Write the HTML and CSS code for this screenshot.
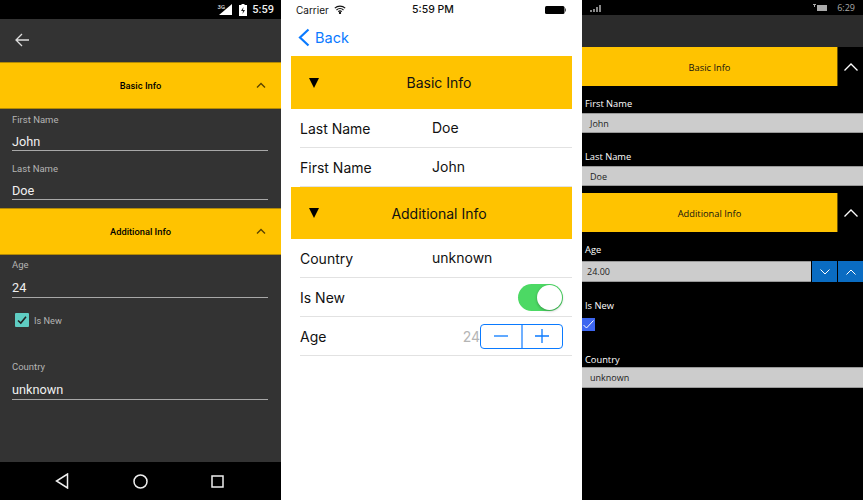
FILE: index.html
```html
<!DOCTYPE html>
<html lang="en">
<head>
<meta charset="UTF-8">
<meta name="viewport" content="width=device-width, initial-scale=1.0">
<title>Accordion Form</title>
<link rel="stylesheet" href="styles.css">
</head>
<body>
<div class="screens">

  <!-- Android -->
  <section class="android">
    <div class="a-status">
      <span class="a-net">3G</span>
      <svg class="a-signal" width="14" height="11" viewBox="0 0 14 11"><path d="M13 0v11H0z" fill="#fff"/></svg>
      <svg class="a-battery" width="8" height="12" viewBox="0 0 8 12"><path d="M2.500 0h3v1H8v11H0V1h2.500z" fill="#fff"/><path d="M4.500 3L2 7h2l-.5 3L6 6H4z" fill="#222"/></svg>
      <span class="a-time">5:59</span>
    </div>
    <div class="a-toolbar">
      <svg width="14" height="14" viewBox="0 0 14 14" fill="none" stroke="#ddd" stroke-width="1.300"><path d="M14 7H1M7 1L1 7l6 6"/></svg>
    </div>
    <div class="a-header">
      <span class="a-title">Basic Info</span>
      <svg class="a-chevron" width="10" height="6" viewBox="0 0 10 6" fill="none" stroke="#5a4300" stroke-width="1.400"><path d="M1 5.500l4-4 4 4"/></svg>
    </div>
    <div class="a-body">
      <div class="a-field">
        <label class="a-label">First Name</label>
        <div class="a-input">John</div>
      </div>
      <div class="a-field">
        <label class="a-label">Last Name</label>
        <div class="a-input">Doe</div>
      </div>
    </div>
    <div class="a-header">
      <span class="a-title">Additional Info</span>
      <svg class="a-chevron" width="10" height="6" viewBox="0 0 10 6" fill="none" stroke="#5a4300" stroke-width="1.400"><path d="M1 5.500l4-4 4 4"/></svg>
    </div>
    <div class="a-body a-body-last">
      <div class="a-field">
        <label class="a-label">Age</label>
        <div class="a-input">24</div>
      </div>
      <div class="a-check-row">
        <span class="a-check">
          <svg width="14" height="14" viewBox="0 0 14 14" fill="none" stroke="#222" stroke-width="1.600"><path d="M3 7.500l2.800 2.500L11 3.800"/></svg>
        </span>
        <span class="a-check-label">Is New</span>
      </div>
      <div class="a-field">
        <label class="a-label">Country</label>
        <div class="a-input">unknown</div>
      </div>
    </div>
    <div class="a-nav">
      <svg width="14" height="16" viewBox="0 0 14 16" fill="none" stroke="#eee" stroke-width="1.500"><path d="M12.500 1v14L1.500 8z"/></svg>
      <svg width="15" height="15" viewBox="0 0 15 15" fill="none" stroke="#eee" stroke-width="1.500"><circle cx="7.500" cy="7.500" r="6.500"/></svg>
      <svg width="13" height="13" viewBox="0 0 13 13" fill="none" stroke="#eee" stroke-width="1.500"><rect x="1" y="1" width="11" height="11"/></svg>
    </div>
  </section>

  <!-- iOS -->
  <section class="ios">
    <div class="i-status">
      <span class="i-carrier">Carrier</span>
      <svg width="12" height="9" viewBox="0 0 12 9" fill="none" stroke="#111" stroke-width="1.100"><path d="M.8 3.200a7.500 7.500 0 0 1 10.400 0M2.500 5a5 5 0 0 1 7 0M4.200 6.700a2.600 2.600 0 0 1 3.600 0"/><circle cx="6" cy="8" r=".6" fill="#111"/></svg>
      <span class="i-time">5:59 PM</span>
      <svg class="i-battery" width="21" height="8" viewBox="0 0 21 8"><rect width="19.500" height="8" rx="1.500" fill="#000"/><rect x="20" y="2.500" width="1" height="3" fill="#555"/></svg>
    </div>
    <div class="i-nav">
      <svg width="12" height="19" viewBox="0 0 12 19" fill="none" stroke="#0a7aff" stroke-width="2.200"><path d="M10.500 1.500l-8.500 8 8.500 8"/></svg>
      <span class="i-back">Back</span>
    </div>
    <div class="i-table">
      <div class="i-header i-header-first">
        <span class="i-arrow"></span>
        <span class="i-title">Basic Info</span>
      </div>
      <div class="i-row"><span class="i-key">Last Name</span><span class="i-value">Doe</span></div>
      <div class="i-row"><span class="i-key">First Name</span><span class="i-value">John</span></div>
      <div class="i-header">
        <span class="i-arrow"></span>
        <span class="i-title">Additional Info</span>
      </div>
      <div class="i-row"><span class="i-key">Country</span><span class="i-value">unknown</span></div>
      <div class="i-row">
        <span class="i-key">Is New</span>
        <span class="i-switch"><span class="i-knob"></span></span>
      </div>
      <div class="i-row">
        <span class="i-key">Age</span>
        <span class="i-age">24</span>
        <span class="i-stepper">
          <span class="i-step"><svg width="14" height="14" viewBox="0 0 14 14" stroke="#0a7aff" stroke-width="1.300"><path d="M0 7h14"/></svg></span>
          <span class="i-step"><svg width="14" height="14" viewBox="0 0 14 14" stroke="#0a7aff" stroke-width="1.300"><path d="M0 7h14M7 0v14"/></svg></span>
        </span>
      </div>
    </div>
  </section>

  <!-- Windows -->
  <section class="win">
    <div class="w-status">
      <svg width="11" height="8" viewBox="0 0 11 8" fill="#888"><path d="M0 6h2v2H0zM3 5h2v3H3zM6 3h2v5H6zM9 1h2v7H9z"/></svg>
      <span class="w-right">
        <svg width="15" height="8" viewBox="0 0 15 8" fill="#aaa"><path d="M0 0h3v1H2v2H1V1H0zM4 1h10v6H4z"/></svg>
        <span class="w-time">6:29</span>
      </span>
    </div>
    <div class="w-toolbar"></div>
    <div class="w-header">
      <div class="w-title">Basic Info</div>
      <div class="w-toggle">
        <svg width="14" height="8" viewBox="0 0 14 8" fill="none" stroke="#fff" stroke-width="1.300"><path d="M.5 7.500L7 1l6.500 6.500"/></svg>
      </div>
    </div>
    <div class="w-field w-first">
      <label class="w-label">First Name</label>
      <div class="w-input">John</div>
    </div>
    <div class="w-field w-last">
      <label class="w-label">Last Name</label>
      <div class="w-input">Doe</div>
    </div>
    <div class="w-header w-header-second">
      <div class="w-title">Additional Info</div>
      <div class="w-toggle">
        <svg width="14" height="8" viewBox="0 0 14 8" fill="none" stroke="#fff" stroke-width="1.300"><path d="M.5 7.500L7 1l6.500 6.500"/></svg>
      </div>
    </div>
    <div class="w-field w-age">
      <label class="w-label">Age</label>
      <div class="w-number">
        <div class="w-input w-input-num">24.00</div>
        <div class="w-spin"><svg width="10" height="6" viewBox="0 0 10 6" fill="none" stroke="#fff"><path d="M.5.500L5 5 9.500.500"/></svg></div>
        <div class="w-spin"><svg width="10" height="6" viewBox="0 0 10 6" fill="none" stroke="#fff"><path d="M.5 5.500L5 1l4.500 4.500"/></svg></div>
      </div>
    </div>
    <div class="w-field w-isnew">
      <label class="w-label">Is New</label>
      <div class="w-check">
        <svg width="13" height="13" viewBox="0 0 13 13" fill="none" stroke="#fff"><path d="M1.500 7l3 3 7-7.500"/></svg>
      </div>
    </div>
    <div class="w-field w-country">
      <label class="w-label">Country</label>
      <div class="w-input">unknown</div>
    </div>
  </section>

</div>
</body>
</html>
```

FILE: styles.css
```css
html, body {
  margin: 0;
  padding: 0;
  background-color: #000;
}
.screens {
  display: flex;
  width: 863px;
  height: 500px;
  overflow: hidden;
}

/* Android */
.android {
  width: 281px;
  height: 500px;
  display: flex;
  flex-direction: column;
  background-color: #333333;
  font-family: Roboto, sans-serif;
}
.a-status {
  height: 19px;
  background-color: #000;
  display: flex;
  align-items: center;
  justify-content: flex-end;
  padding-right: 7px;
  color: #eee;
  position: relative;
}
.a-net {
  position: absolute;
  right: 56px;
  top: 3px;
  font-size: 6px;
  color: #fff;
}
.a-signal {
  margin-right: 6px;
}
.a-battery {
  margin-right: 5px;
}
.a-time {
  font-size: 11px;
  font-weight: 500;
}
.a-toolbar {
  height: 41px;
  padding-bottom: 2px;
  display: flex;
  align-items: center;
  padding-left: 15px;
}
.a-header {
  box-sizing: border-box;
  height: 47px;
  background-color: #ffc300;
  border-top: 1px solid #b38a05;
  border-bottom: 1px solid #b38a05;
  display: flex;
  align-items: center;
  position: relative;
  flex: none;
}
.a-title {
  width: 100%;
  text-align: center;
  font-size: 9.300px;
  font-weight: 500;
  color: #000;
}
.a-chevron {
  position: absolute;
  right: 15px;
  top: 19px;
}
.a-body {
  height: 99px;
  box-sizing: border-box;
  padding: 5px 13px 0 12px;
}
.a-body-last {
  height: auto;
  flex: 1;
  padding-top: 4px;
}
.a-field {
  height: 49px;
}
.a-label {
  display: block;
  font-size: 9.500px;
  line-height: 12px;
  color: #b4b4b4;
}
.a-input {
  margin-top: 4px;
  height: 20px;
  font-size: 12.700px;
  line-height: 23px;
  color: #f0f0f0;
  border-bottom: 1px solid #a8a8a8;
}
.a-body-last .a-input {
  margin-top: 6px;
  line-height: 21px;
}
.a-check-row {
  height: 53px;
  box-sizing: border-box;
  display: flex;
  align-items: flex-start;
  padding: 5px 0 0 3px;
}
.a-check {
  width: 14px;
  height: 14px;
  background-color: #5fcdc3;
  border-radius: 1px;
  display: flex;
}
.a-check-label {
  font-size: 9.200px;
  line-height: 15px;
  color: #b4b4b4;
  margin-left: 5px;
}
.a-nav {
  height: 38px;
  background-color: #000;
  display: flex;
  align-items: center;
  justify-content: space-between;
  padding: 0 57px 0 55px;
  flex: none;
}

/* iOS */
.ios {
  width: 301px;
  height: 500px;
  background-color: #fff;
  font-family: Inter, sans-serif;
  color: #111;
}
.i-status {
  height: 19px;
  display: flex;
  align-items: center;
  padding: 0 16px 0 15px;
  font-size: 10px;
  position: relative;
}
.i-carrier {
  margin-right: 5px;
}
.i-time {
  position: absolute;
  left: 131px;
  font-size: 10.500px;
  font-weight: 500;
}
.i-battery {
  margin-left: auto;
}
.i-nav {
  height: 37px;
  display: flex;
  align-items: center;
  padding-left: 17px;
  color: #0a7aff;
}
.i-back {
  font-size: 14.500px;
  margin-left: 5px;
}
.i-table {
  margin: 0 10px;
}
.i-header {
  height: 52px;
  background-color: #ffc300;
  display: flex;
  align-items: center;
  position: relative;
}
.i-header-first {
  height: 53px;
}
.i-arrow {
  position: absolute;
  left: 18px;
  top: 21px;
  width: 0;
  height: 0;
  border-left: 5px solid transparent;
  border-right: 5px solid transparent;
  border-top: 10px solid #000;
}
.i-header-first .i-arrow {
  top: 22px;
}
.i-title {
  width: 100%;
  text-align: center;
  padding-left: 15px;
  font-size: 14px;
  color: #111;
}
.i-row {
  height: 38px;
  margin-left: 9px;
  border-bottom: 1px solid #e2e2e2;
  display: flex;
  align-items: center;
  font-size: 14px;
}
.i-key {
  width: 132px;
  flex: none;
}
.i-value {
  color: #111;
  padding-bottom: 2px;
}
.i-switch {
  margin-left: auto;
  margin-right: 9px;
  width: 45px;
  height: 27px;
  border-radius: 14px;
  background-color: #4cd964;
  display: flex;
  justify-content: flex-end;
  align-items: center;
  padding-right: 1px;
  box-sizing: border-box;
}
.i-knob {
  width: 25px;
  height: 25px;
  border-radius: 50%;
  background-color: #fff;
  box-shadow: 0 1px 3px rgba(0, 0, 0, 0.3);
}
.i-age {
  margin-left: auto;
  color: #b5b5b5;
}
.i-stepper {
  width: 83px;
  height: 25px;
  margin-right: 9px;
  box-sizing: border-box;
  border: 1px solid #0a7aff;
  border-radius: 4px;
  display: flex;
}
.i-step {
  flex: 1;
  display: flex;
  align-items: center;
  justify-content: center;
}
.i-step + .i-step {
  border-left: 2px solid #70b0ff;
}

/* Windows */
.win {
  width: 281px;
  height: 500px;
  background-color: #000;
  font-family: "Open Sans", sans-serif;
  font-size: 9.300px;
  color: #fff;
}
.w-status {
  height: 15px;
  display: flex;
  align-items: center;
  justify-content: space-between;
  padding: 0 8px;
}
.w-right {
  display: flex;
  align-items: center;
  gap: 9px;
}
.w-time {
  color: #aaa;
  font-size: 9px;
}
.w-toolbar {
  height: 32px;
  background-color: #2b2b2b;
}
.w-header {
  height: 39px;
  display: flex;
}
.w-header-second {
  margin-top: 7px;
}
.w-title {
  width: 256px;
  background-color: #ffc300;
  border-right: 1px solid #6b5200;
  box-sizing: border-box;
  display: flex;
  align-items: center;
  justify-content: center;
  padding-top: 1px;
  color: #111;
}
.w-toggle {
  flex: 1;
  display: flex;
  align-items: center;
  justify-content: center;
}
.w-field {
  height: 53px;
}
.w-first {
  margin-top: 11px;
}
.w-last {
  height: 36px;
}
.w-label {
  display: block;
  height: 16px;
  line-height: 13px;
  padding-left: 3px;
}
.w-input {
  height: 20px;
  line-height: 19px;
  font-size: 9px;
  background-color: #cccccc;
  color: #222;
  padding-left: 8px;
  border-top: 1px solid #999;
  border-bottom: 1px solid #999;
  box-sizing: border-box;
}
.w-age {
  margin-top: 11px;
  height: 56px;
}
.w-age .w-label {
  height: 18px;
}
.w-number {
  display: flex;
  height: 21px;
}
.w-input-num {
  width: 229px;
  height: 21px;
  line-height: 20px;
  padding-left: 5px;
  margin-right: 1px;
}
.w-spin {
  width: 25px;
  background-color: #0a6cc2;
  margin-right: 1px;
  display: flex;
  align-items: center;
  justify-content: center;
}
.w-spin:last-child {
  margin-right: 0;
}
.w-isnew {
  height: 54px;
}
.w-isnew .w-label {
  margin-bottom: 3px;
}
.w-check {
  width: 13px;
  height: 13px;
  background-color: #3d66f0;
  display: flex;
}
.w-country {
  height: 36px;
}
.w-country .w-label {
  height: 14px;
}
.w-country .w-input {
  height: 21px;
  line-height: 20px;
}
```
